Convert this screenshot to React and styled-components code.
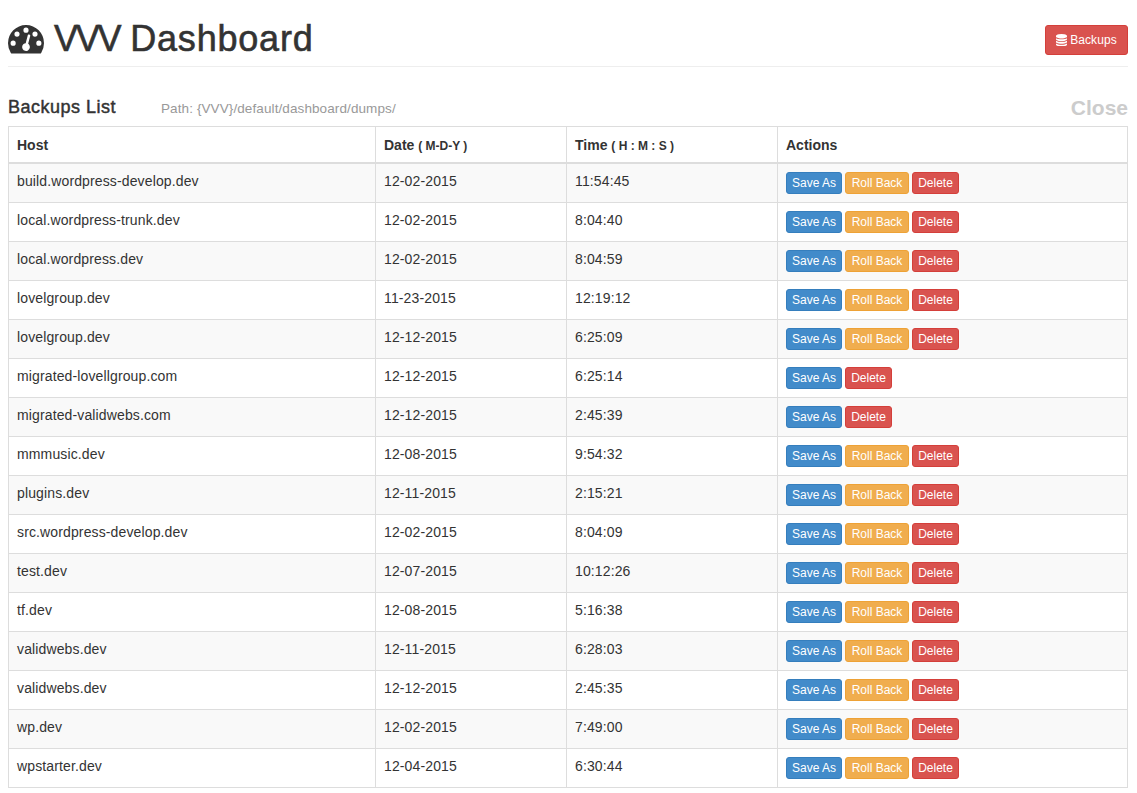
import React from 'react';
import styled, { createGlobalStyle } from 'styled-components';

const Global = createGlobalStyle`
  * { box-sizing: border-box; }
  body { margin: 0; background: #fff; color: #333; font: 14px/20px "Liberation Sans", Arial, sans-serif; }
`;
const Page = styled.main`padding: 0 9px 0 8px;`;
const Header = styled.header`
  display: flex; justify-content: space-between; height: 67px; border-bottom: 1px solid #eee;
`;
const Title = styled.h1`
  display: flex; margin: 19px 0 0; font-size: 36px; line-height: 40px; font-weight: 400; white-space: nowrap;
`;
const Gauge = styled.svg`width: 36px; height: 28.5px; margin: 6px 10px 0 0;`;
const TitleText = styled.span`letter-spacing: 0.8px; -webkit-text-stroke: 0.6px #333;`;
const Brand = styled.span`letter-spacing: -2.2px;`;
const BackupsButton = styled.button`
  display: flex; align-items: center; justify-content: center; gap: 3px; width: 83px; height: 30px; margin-top: 25px; padding: 0;
  color: #fff; background: #d9534f; border: 1px solid #d43f3a; border-radius: 3px;
  font: 12px/18px "Liberation Sans", Arial, sans-serif; letter-spacing: 0.1px;
`;
const DatabaseIcon = styled.svg`width: 11px; height: 12.5px;`;
const Subhead = styled.div`display: flex; align-items: flex-start; height: 59px; padding-top: 30px;`;
const ListTitle = styled.h4`
  width: 153px; margin: 0; font-size: 18px; line-height: 20px; font-weight: 400;
  letter-spacing: 0.5px; -webkit-text-stroke: 0.45px #333;
`;
const Path = styled.span`font-size: 13.5px; line-height: 24px; letter-spacing: 0.1px; color: #999;`;
const Close = styled.span`margin-left: auto; font-size: 21px; line-height: 21px; font-weight: 700; color: #ccc;`;
const Table = styled.table`
  width: 1120px; table-layout: fixed; border-collapse: collapse; border: 1px solid #ddd;
`;
const Col = styled.col`width: ${p => p.$w}px;`;
const Th = styled.th`
  height: 36px; padding: 8px 8px 6px; border: 1px solid #ddd; border-bottom-width: 2px;
  text-align: left; vertical-align: top; line-height: 20px;
  small { font-size: 12px; line-height: 1; }
`;
const Row = styled.tr`background: ${p => (p.$odd ? '#f9f9f9' : '#fff')};`;
const Td = styled.td`
  height: 39px; padding: 7px 8px; border: 1px solid #ddd; vertical-align: top; line-height: 20px; letter-spacing: 0.13px;
  tr:first-child > & { height: 40px; }
`;
const Actions = styled.div`display: flex; gap: 3px; padding-top: 1px;`;
const tones = {
  save: ['#428bca', '#357ebd', 56],
  roll: ['#f0ad4e', '#eea236', 64],
  del: ['#d9534f', '#d43f3a', 47],
};
const Action = styled.button`
  width: ${p => tones[p.$tone][2]}px; height: 22px; padding: 0; color: #fff; white-space: nowrap;
  background: ${p => tones[p.$tone][0]}; border: 1px solid ${p => tones[p.$tone][1]}; border-radius: 3px;
  font: 12px/18px "Liberation Sans", Arial, sans-serif;
`;

const backups = [
  ['build.wordpress-develop.dev', '12-02-2015', '11:54:45'],
  ['local.wordpress-trunk.dev', '12-02-2015', '8:04:40'],
  ['local.wordpress.dev', '12-02-2015', '8:04:59'],
  ['lovelgroup.dev', '11-23-2015', '12:19:12'],
  ['lovelgroup.dev', '12-12-2015', '6:25:09'],
  ['migrated-lovellgroup.com', '12-12-2015', '6:25:14', true],
  ['migrated-validwebs.com', '12-12-2015', '2:45:39', true],
  ['mmmusic.dev', '12-08-2015', '9:54:32'],
  ['plugins.dev', '12-11-2015', '2:15:21'],
  ['src.wordpress-develop.dev', '12-02-2015', '8:04:09'],
  ['test.dev', '12-07-2015', '10:12:26'],
  ['tf.dev', '12-08-2015', '5:16:38'],
  ['validwebs.dev', '12-11-2015', '6:28:03'],
  ['validwebs.dev', '12-12-2015', '2:45:35'],
  ['wp.dev', '12-02-2015', '7:49:00'],
  ['wpstarter.dev', '12-04-2015', '6:30:44'],
];

export default function App() {
  return (
    <Page>
      <Global />
      <Header>
        <Title>
          <Gauge viewBox="0 0 1792 1408" preserveAspectRatio="none" fill="#333">
            <path fillRule="evenodd" d="M384 896a128 128 0 1 0-256 0a128 128 0 1 0 256 0zM576 448a128 128 0 1 0-256 0a128 128 0 1 0 256 0zM1004 929l101-382q6-26-7.500-48.500t-38.500-29.500t-48 6.500t-30 39.500l-101 382q-60 5-107 43.500t-63 98.500q-20 77 20 146t117 89t146-20t89-117q16-60-6-117t-72-91zM1664 896a128 128 0 1 0-256 0a128 128 0 1 0 256 0zM1024 256a128 128 0 1 0-256 0a128 128 0 1 0 256 0zM1472 448a128 128 0 1 0-256 0a128 128 0 1 0 256 0zM1792 896q0 261-141 483q-19 29-54 29H195q-35 0-54-29Q0 1158 0 896q0-182 71-348t191-286T548 71T896 0t348 71t286 191t191 286t71 348z" />
          </Gauge>
          <TitleText><Brand>VVV</Brand> Dashboard</TitleText>
        </Title>
        <BackupsButton>
          <DatabaseIcon viewBox="0 0 1536 1792" preserveAspectRatio="none" fill="#fff">
            <path d="M768 768q237 0 443-43t325-127v170q0 69-103 128t-280 93.500-385 34.500-385-34.500-280-93.500-103-128v-170q119 84 325 127t443 43zM768 1536q237 0 443-43t325-127v170q0 69-103 128t-280 93.500-385 34.500-385-34.500-280-93.500-103-128v-170q119 84 325 127t443 43zM768 1152q237 0 443-43t325-127v170q0 69-103 128t-280 93.500-385 34.500-385-34.500-280-93.500-103-128v-170q119 84 325 127t443 43zM768 0q208 0 385 34.500t280 93.500 103 128v128q0 69-103 128t-280 93.500-385 34.500-385-34.500-280-93.500-103-128v-128q0-69 103-128t280-93.500 385-34.500z" />
          </DatabaseIcon>
          Backups
        </BackupsButton>
      </Header>
      <Subhead>
        <ListTitle>Backups List</ListTitle>
        <Path>Path: {'{VVV}'}/default/dashboard/dumps/</Path>
        <Close>Close</Close>
      </Subhead>
      <Table>
        <colgroup><Col $w={367} /><Col $w={191} /><Col $w={211} /><Col $w={350} /></colgroup>
        <thead>
          <tr>
            <Th>Host</Th>
            <Th>Date <small>( M-D-Y )</small></Th>
            <Th>Time <small>( H : M : S )</small></Th>
            <Th>Actions</Th>
          </tr>
        </thead>
        <tbody>
          {backups.map(([host, date, time, migrated], i) => (
            <Row key={i} $odd={i % 2 === 0}>
              <Td>{host}</Td>
              <Td>{date}</Td>
              <Td>{time}</Td>
              <Td>
                <Actions>
                  <Action $tone="save">Save As</Action>
                  {!migrated && <Action $tone="roll">Roll Back</Action>}
                  <Action $tone="del">Delete</Action>
                </Actions>
              </Td>
            </Row>
          ))}
        </tbody>
      </Table>
    </Page>
  );
}
